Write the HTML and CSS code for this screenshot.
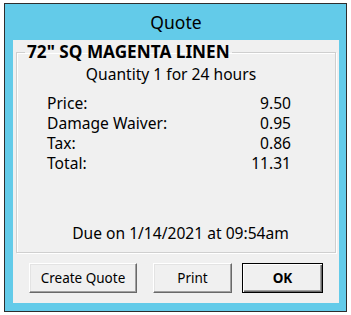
FILE: index.html
```html
<!DOCTYPE html>
<html>
<head>
<meta charset="utf-8">
<link rel="stylesheet" href="styles.css">
</head>
<body>
<div class="window">
  <div class="titlebar">Quote</div>
  <div class="client">
    <fieldset class="group">
      <legend class="legend">72" SQ MAGENTA LINEN</legend>
      <div class="gbody">
        <div class="qty">Quantity 1 for 24 hours</div>
        <div class="rows">
          <div class="row"><span>Price:</span><span>9.50</span></div>
          <div class="row"><span>Damage Waiver:</span><span>0.95</span></div>
          <div class="row"><span>Tax:</span><span>0.86</span></div>
          <div class="row"><span>Total:</span><span>11.31</span></div>
        </div>
        <div class="due">Due on 1/14/2021 at 09:54am</div>
      </div>
    </fieldset>
    <div class="buttons">
      <button class="btn btn-create">Create Quote</button>
      <button class="btn btn-print">Print</button>
      <button class="btn btn-ok">OK</button>
    </div>
  </div>
</div>
</body>
</html>
```

FILE: styles.css
```css
* { box-sizing: border-box; }
html, body { margin: 0; padding: 0; background: #ffffff; }
body {
  font-family: "Noto Sans", "Open Sans", sans-serif;
  font-size: 15.6px;
  color: #000;
}
.window {
  margin: 3px 0 0 4px;
  width: 343px;
  height: 309px;
  border: 1px solid #2e2e2e;
  background: #63cbe9;
  padding: 0 7px 8px 8px;
  display: flex;
  flex-direction: column;
}
.titlebar {
  height: 36px;
  flex: none;
  display: flex;
  align-items: center;
  justify-content: center;
  font-size: 17.5px;
  padding-bottom: 1px;
  color: #000;
}
.client {
  flex: 1;
  background: #f0f0f0;
  display: flex;
  flex-direction: column;
  padding: 3px 3px 0 3px;
}
.group {
  margin: 0;
  padding: 0;
  border: 1px solid #cfcfcf;
  box-shadow: inset 1px 1px 0 #fff, 1px 1px 0 #fff;
  min-width: 0;
}
.legend {
  font-weight: bold;
  font-size: 17.2px;
  padding: 0 2px;
  margin-left: 8px;
  line-height: 18px;
}
.gbody {
  height: 191px;
  display: flex;
  flex-direction: column;
  padding-bottom: 9px;
}
.qty {
  text-align: center;
  margin-top: 3px;
  margin-right: 10px;
  line-height: 20px;
}
.rows {
  margin: 9px 44px 0 30px;
  display: flex;
  flex-direction: column;
}
.row {
  display: flex;
  justify-content: space-between;
  line-height: 20px;
}
.due {
  margin-top: auto;
  text-align: center;
  padding-left: 9px;
  line-height: 20px;
}
.buttons {
  display: flex;
  margin-top: 10px;
  padding-left: 13px;
}
.btn {
  font-family: inherit;
  font-size: 13.5px;
  color: #000;
  background: #f0f0f0;
  height: 30px;
  margin: 0;
  padding: 0;
  border: 1px solid;
  border-color: #fff #696969 #696969 #fff;
  box-shadow: inset -1px -1px 0 #a0a0a0, inset 1px 1px 0 #e3e3e3;
}
.btn-create { width: 108px; }
.btn-print { width: 79px; margin-left: 16px; }
.btn-ok {
  width: 81px;
  margin-left: 10px;
  font-weight: bold;
  border: 1px solid #000;
  box-shadow: inset 1px 1px 0 #fff, inset -1px -1px 0 #696969, inset -2px -2px 0 #a0a0a0;
}
```
